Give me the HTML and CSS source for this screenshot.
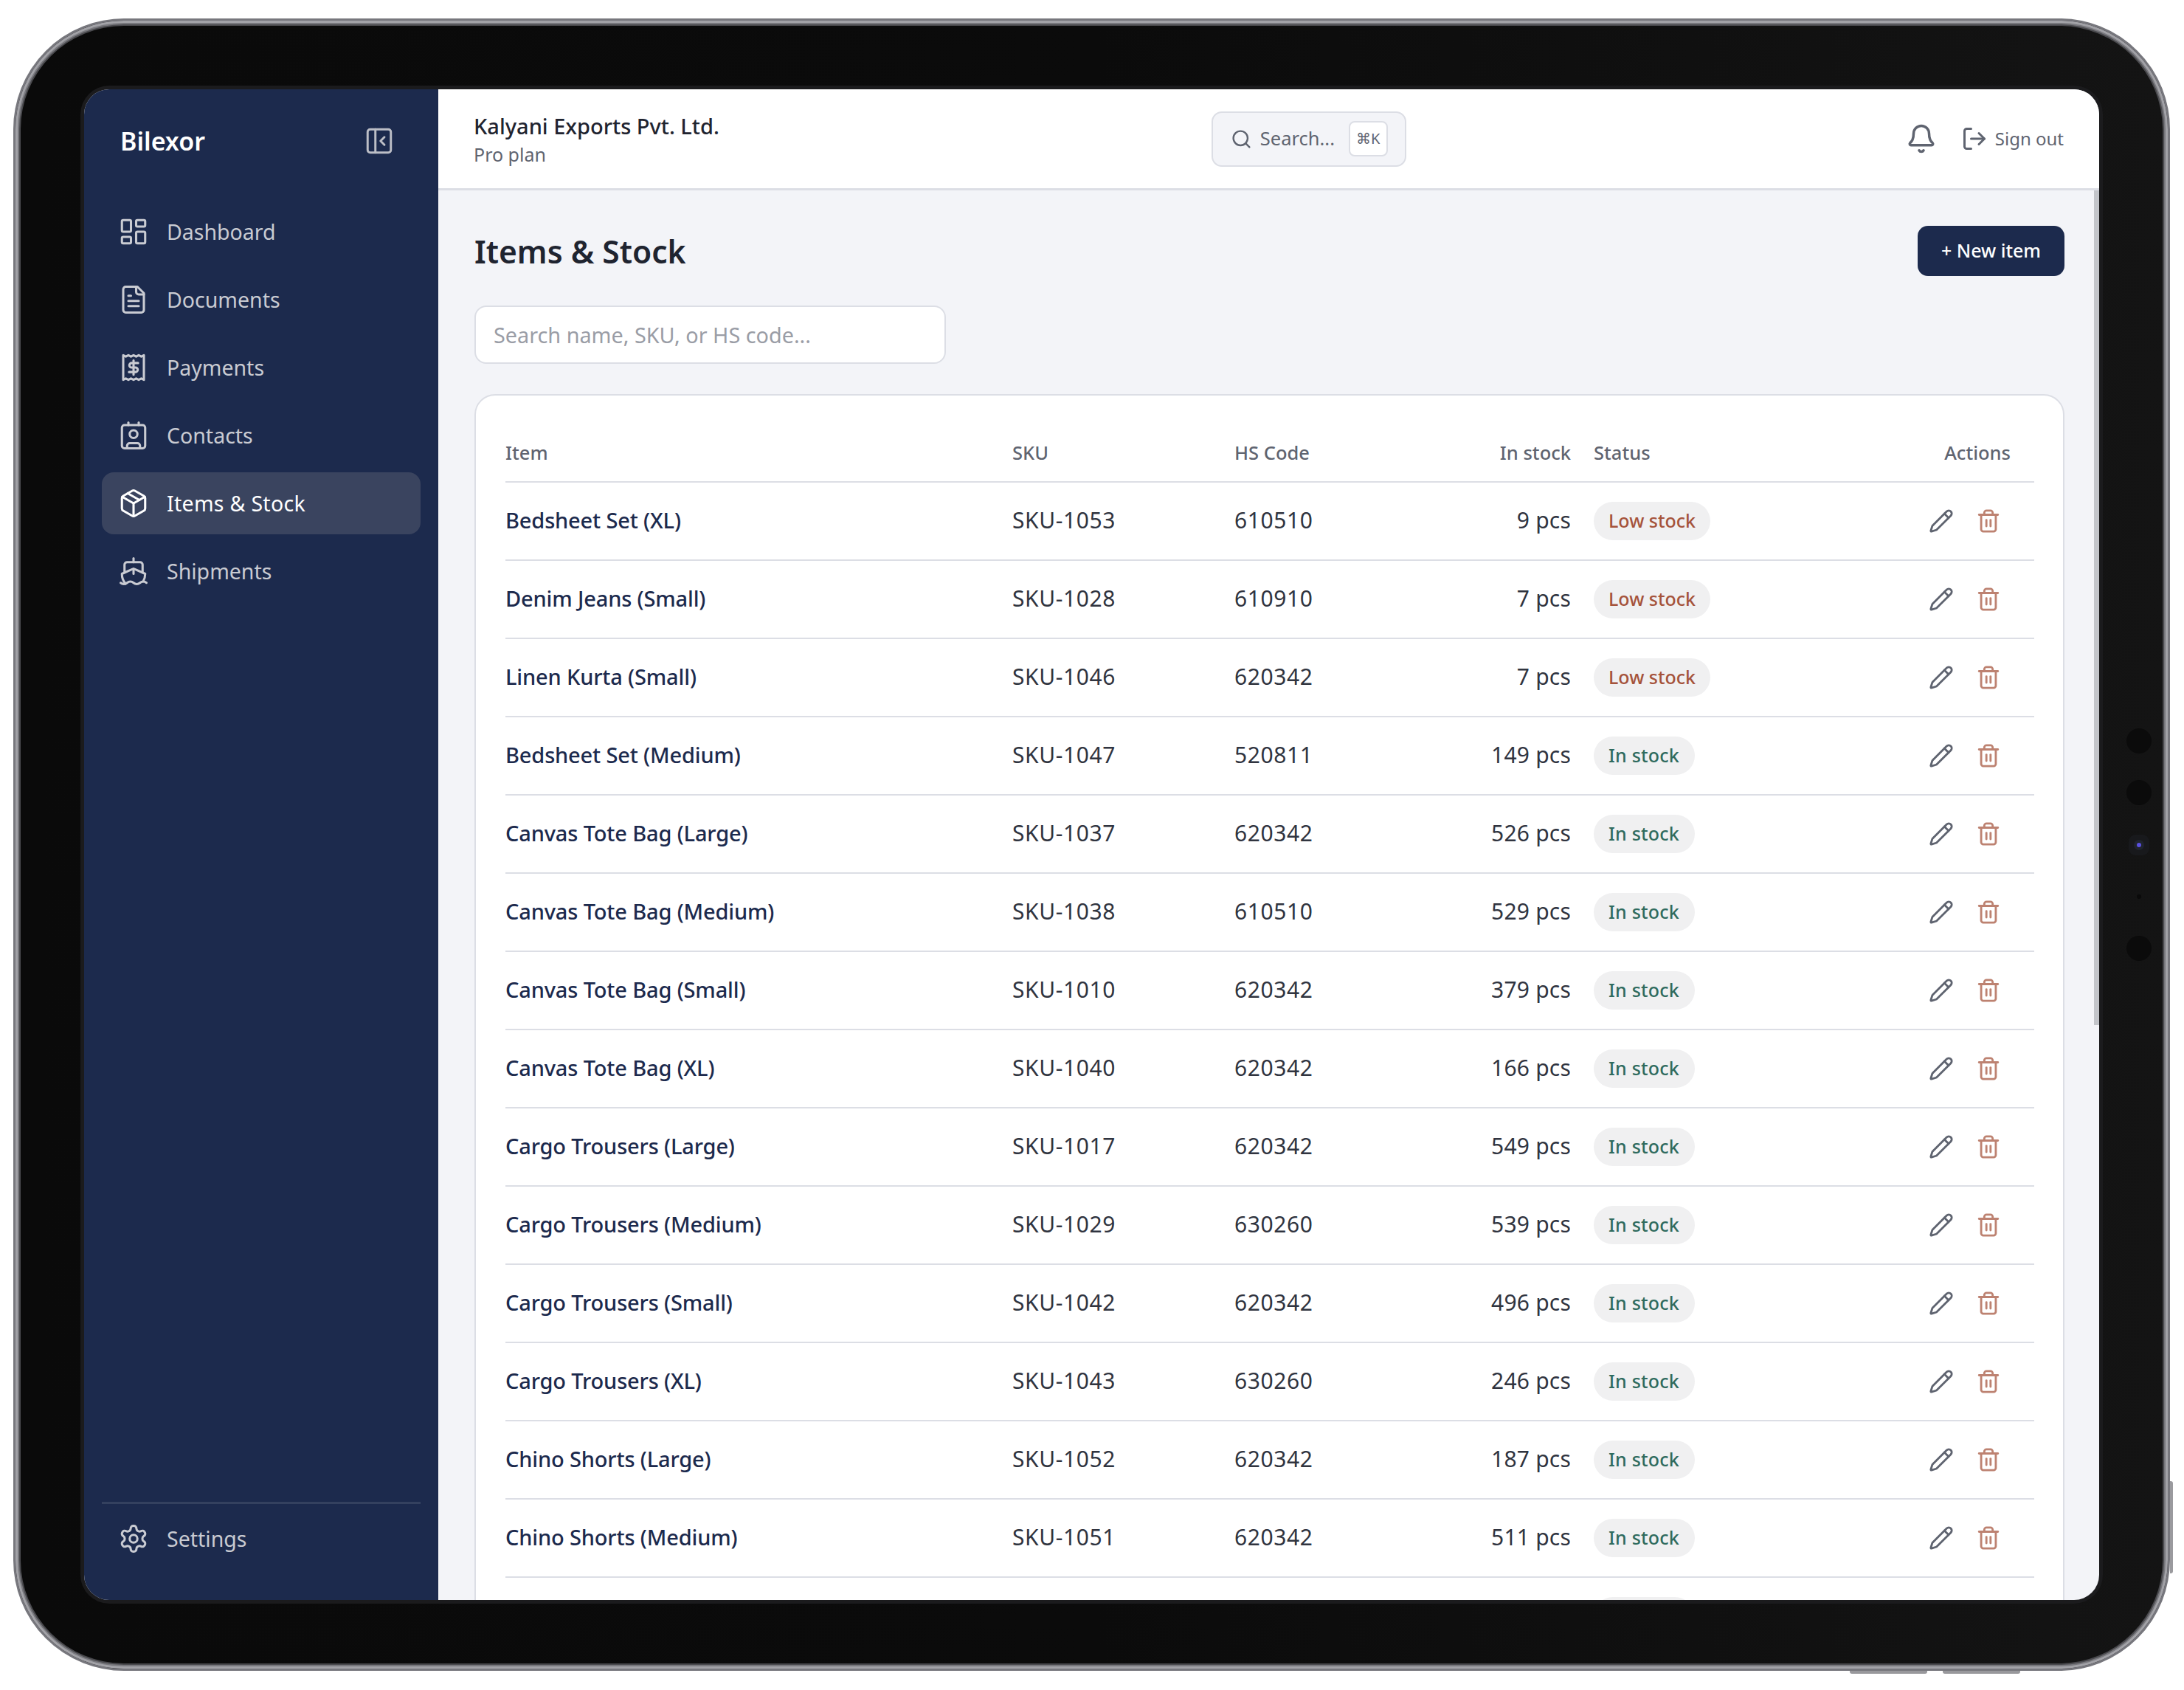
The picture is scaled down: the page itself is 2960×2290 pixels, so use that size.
FILE: index.html
```html
<!DOCTYPE html>
<html>
<head lang="en">
    <meta charset="UTF-8">
    <title>Items &amp; Stock</title>
    <link rel="stylesheet" href="styles.css">
</head>
<body>
<svg width="0" height="0" class="defs">
    <symbol id="i-dash" viewBox="0 0 24 24"><rect width="7" height="9" x="3" y="3" rx="1"/><rect width="7" height="5" x="14" y="3" rx="1"/><rect width="7" height="9" x="14" y="12" rx="1"/><rect width="7" height="5" x="3" y="16" rx="1"/></symbol>
    <symbol id="i-doc" viewBox="0 0 24 24"><path d="M15 2H6a2 2 0 0 0-2 2v16a2 2 0 0 0 2 2h12a2 2 0 0 0 2-2V7Z"/><path d="M14 2v4a2 2 0 0 0 2 2h4"/><path d="M10 9H8"/><path d="M16 13H8"/><path d="M16 17H8"/></symbol>
    <symbol id="i-pay" viewBox="0 0 24 24"><path d="M4 2.5l2 1 2-1 2 1 2-1 2 1 2-1 2 1 2-1v19l-2-1-2 1-2-1-2 1-2-1-2 1-2-1-2 1z"/><path d="M15.5 8.5h-5a1.75 1.75 0 0 0 0 3.5h3a1.75 1.75 0 0 1 0 3.5h-5"/><path d="M12 6.5v11"/></symbol>
    <symbol id="i-contact" viewBox="0 0 24 24"><path d="M16 2v2"/><path d="M7 22v-2a2 2 0 0 1 2-2h6a2 2 0 0 1 2 2v2"/><path d="M8 2v2"/><circle cx="12" cy="11" r="3"/><rect x="3" y="4" width="18" height="18" rx="2"/></symbol>
    <symbol id="i-box" viewBox="0 0 24 24"><path d="M11 21.73a2 2 0 0 0 2 0l7-4A2 2 0 0 0 21 16V8a2 2 0 0 0-1-1.73l-7-4a2 2 0 0 0-2 0l-7 4A2 2 0 0 0 3 8v8a2 2 0 0 0 1 1.73z"/><path d="M12 22V12"/><path d="M3.29 7 12 12l8.71-5"/><path d="m7.5 4.27 9 5.15"/></symbol>
    <symbol id="i-ship" viewBox="0 0 24 24"><path d="M12 10.189V14"/><path d="M12 2v3"/><path d="M19 13V7a2 2 0 0 0-2-2H7a2 2 0 0 0-2 2v6"/><path d="M19.38 20A11.6 11.6 0 0 0 21 14l-8.188-3.639a2 2 0 0 0-1.624 0L3 14a11.6 11.6 0 0 0 2.81 7.76"/><path d="M2 21c.6.5 1.2 1 2.5 1 2.5 0 2.5-2 5-2 1.3 0 1.9.5 2.5 1s1.2 1 2.5 1c2.5 0 2.5-2 5-2 1.3 0 1.9.5 2.5 1"/></symbol>
    <symbol id="i-gear" viewBox="0 0 24 24"><path d="M12.22 2h-.44a2 2 0 0 0-2 2v.18a2 2 0 0 1-1 1.73l-.43.25a2 2 0 0 1-2 0l-.15-.08a2 2 0 0 0-2.73.73l-.22.38a2 2 0 0 0 .73 2.73l.15.1a2 2 0 0 1 1 1.72v.51a2 2 0 0 1-1 1.74l-.15.09a2 2 0 0 0-.73 2.73l.22.38a2 2 0 0 0 2.73.73l.15-.08a2 2 0 0 1 2 0l.43.25a2 2 0 0 1 1 1.73V20a2 2 0 0 0 2 2h.44a2 2 0 0 0 2-2v-.18a2 2 0 0 1 1-1.73l.43-.25a2 2 0 0 1 2 0l.15.08a2 2 0 0 0 2.73-.73l.22-.39a2 2 0 0 0-.73-2.73l-.15-.08a2 2 0 0 1-1-1.74v-.5a2 2 0 0 1 1-1.74l.15-.09a2 2 0 0 0 .73-2.73l-.22-.38a2 2 0 0 0-2.73-.73l-.15.08a2 2 0 0 1-2 0l-.43-.25a2 2 0 0 1-1-1.73V4a2 2 0 0 0-2-2z"/><circle cx="12" cy="12" r="3"/></symbol>
    <symbol id="i-panel" viewBox="0 0 24 24"><rect width="18" height="18" x="3" y="3" rx="2"/><path d="M9 3v18"/><path d="m16 15-3-3 3-3"/></symbol>
    <symbol id="i-search" viewBox="0 0 24 24"><circle cx="11" cy="11" r="8"/><path d="m21 21-4.3-4.3"/></symbol>
    <symbol id="i-bell" viewBox="0 0 24 24"><path d="M10.268 21a2 2 0 0 0 3.464 0"/><path d="M3.262 15.326A1 1 0 0 0 4 17h16a1 1 0 0 0 .74-1.673C19.41 13.956 18 12.499 18 8A6 6 0 0 0 6 8c0 4.499-1.411 5.956-2.738 7.326"/></symbol>
    <symbol id="i-out" viewBox="0 0 24 24"><path d="M9 21H5a2 2 0 0 1-2-2V5a2 2 0 0 1 2-2h4"/><path d="m16 17 5-5-5-5"/><path d="M21 12H9"/></symbol>
    <symbol id="i-pen" viewBox="0 0 24 24"><path d="M21.174 6.812a1 1 0 0 0-3.986-3.987L3.842 16.174a2 2 0 0 0-.5.83l-1.321 4.352a.5.5 0 0 0 .623.622l4.353-1.32a2 2 0 0 0 .83-.497z"/><path d="m15 5 4 4"/></symbol>
    <symbol id="i-trash" viewBox="0 0 24 24"><path d="M3 6h18"/><path d="M19 6v14c0 1-1 2-2 2H7c-1 0-2-1-2-2V6"/><path d="M8 6V4c0-1 1-2 2-2h4c1 0 2 1 2 2v2"/><path d="M10 11v6"/><path d="M14 11v6"/></symbol>
</svg>

<div class="device">
    <span class="btn-side"></span>
    <span class="btn-bottom b1"></span>
    <span class="btn-bottom b2"></span>
    <div class="sensors">
        <span class="dot"></span>
        <span class="dot"></span>
        <span class="led"></span>
        <span class="pin"></span>
        <span class="dot"></span>
    </div>
    <div class="screen">
        <aside class="sidebar">
            <div class="brand">
                <span class="brand-name">Bilexor</span>
                <svg class="ico collapse"><use href="#i-panel"/></svg>
            </div>
            <nav class="nav">
                <a class="nav-item"><svg class="ico"><use href="#i-dash"/></svg>Dashboard</a>
                <a class="nav-item"><svg class="ico"><use href="#i-doc"/></svg>Documents</a>
                <a class="nav-item"><svg class="ico"><use href="#i-pay"/></svg>Payments</a>
                <a class="nav-item"><svg class="ico"><use href="#i-contact"/></svg>Contacts</a>
                <a class="nav-item active"><svg class="ico"><use href="#i-box"/></svg>Items &amp; Stock</a>
                <a class="nav-item"><svg class="ico"><use href="#i-ship"/></svg>Shipments</a>
            </nav>
            <div class="side-foot">
                <a class="nav-item"><svg class="ico"><use href="#i-gear"/></svg>Settings</a>
            </div>
        </aside>
        <div class="main">
            <header class="topbar">
                <div class="org">
                    <div class="org-name">Kalyani Exports Pvt. Ltd.</div>
                    <div class="org-plan">Pro plan</div>
                </div>
                <div class="quick">
                    <svg class="ico"><use href="#i-search"/></svg>
                    <span>Search...</span>
                    <kbd>⌘K</kbd>
                </div>
                <div class="top-right">
                    <svg class="ico bell"><use href="#i-bell"/></svg>
                    <a class="signout"><svg class="ico"><use href="#i-out"/></svg><span>Sign out</span></a>
                </div>
            </header>
            <main class="page">
                <span class="thumb"></span>
                <div class="page-head">
                    <h1>Items &amp; Stock</h1>
                    <button class="new-btn">+ New item</button>
                </div>
                <div class="filter">Search name, SKU, or HS code...</div>
                <section class="card">
                    <table>
                        <thead>
                            <tr><th>Item</th><th>SKU</th><th>HS Code</th><th class="num">In stock</th><th class="st">Status</th><th class="act">Actions</th></tr>
                        </thead>
                        <tbody>
                            <tr><td class="name">Bedsheet Set (XL)</td><td>SKU-1053</td><td>610510</td><td class="num">9 pcs</td><td class="st"><span class="pill low">Low stock</span></td><td class="act"><svg class="ico pen"><use href="#i-pen"/></svg><svg class="ico trash"><use href="#i-trash"/></svg></td></tr>
                            <tr><td class="name">Denim Jeans (Small)</td><td>SKU-1028</td><td>610910</td><td class="num">7 pcs</td><td class="st"><span class="pill low">Low stock</span></td><td class="act"><svg class="ico pen"><use href="#i-pen"/></svg><svg class="ico trash"><use href="#i-trash"/></svg></td></tr>
                            <tr><td class="name">Linen Kurta (Small)</td><td>SKU-1046</td><td>620342</td><td class="num">7 pcs</td><td class="st"><span class="pill low">Low stock</span></td><td class="act"><svg class="ico pen"><use href="#i-pen"/></svg><svg class="ico trash"><use href="#i-trash"/></svg></td></tr>
                            <tr><td class="name">Bedsheet Set (Medium)</td><td>SKU-1047</td><td>520811</td><td class="num">149 pcs</td><td class="st"><span class="pill ok">In stock</span></td><td class="act"><svg class="ico pen"><use href="#i-pen"/></svg><svg class="ico trash"><use href="#i-trash"/></svg></td></tr>
                            <tr><td class="name">Canvas Tote Bag (Large)</td><td>SKU-1037</td><td>620342</td><td class="num">526 pcs</td><td class="st"><span class="pill ok">In stock</span></td><td class="act"><svg class="ico pen"><use href="#i-pen"/></svg><svg class="ico trash"><use href="#i-trash"/></svg></td></tr>
                            <tr><td class="name">Canvas Tote Bag (Medium)</td><td>SKU-1038</td><td>610510</td><td class="num">529 pcs</td><td class="st"><span class="pill ok">In stock</span></td><td class="act"><svg class="ico pen"><use href="#i-pen"/></svg><svg class="ico trash"><use href="#i-trash"/></svg></td></tr>
                            <tr><td class="name">Canvas Tote Bag (Small)</td><td>SKU-1010</td><td>620342</td><td class="num">379 pcs</td><td class="st"><span class="pill ok">In stock</span></td><td class="act"><svg class="ico pen"><use href="#i-pen"/></svg><svg class="ico trash"><use href="#i-trash"/></svg></td></tr>
                            <tr><td class="name">Canvas Tote Bag (XL)</td><td>SKU-1040</td><td>620342</td><td class="num">166 pcs</td><td class="st"><span class="pill ok">In stock</span></td><td class="act"><svg class="ico pen"><use href="#i-pen"/></svg><svg class="ico trash"><use href="#i-trash"/></svg></td></tr>
                            <tr><td class="name">Cargo Trousers (Large)</td><td>SKU-1017</td><td>620342</td><td class="num">549 pcs</td><td class="st"><span class="pill ok">In stock</span></td><td class="act"><svg class="ico pen"><use href="#i-pen"/></svg><svg class="ico trash"><use href="#i-trash"/></svg></td></tr>
                            <tr><td class="name">Cargo Trousers (Medium)</td><td>SKU-1029</td><td>630260</td><td class="num">539 pcs</td><td class="st"><span class="pill ok">In stock</span></td><td class="act"><svg class="ico pen"><use href="#i-pen"/></svg><svg class="ico trash"><use href="#i-trash"/></svg></td></tr>
                            <tr><td class="name">Cargo Trousers (Small)</td><td>SKU-1042</td><td>620342</td><td class="num">496 pcs</td><td class="st"><span class="pill ok">In stock</span></td><td class="act"><svg class="ico pen"><use href="#i-pen"/></svg><svg class="ico trash"><use href="#i-trash"/></svg></td></tr>
                            <tr><td class="name">Cargo Trousers (XL)</td><td>SKU-1043</td><td>630260</td><td class="num">246 pcs</td><td class="st"><span class="pill ok">In stock</span></td><td class="act"><svg class="ico pen"><use href="#i-pen"/></svg><svg class="ico trash"><use href="#i-trash"/></svg></td></tr>
                            <tr><td class="name">Chino Shorts (Large)</td><td>SKU-1052</td><td>620342</td><td class="num">187 pcs</td><td class="st"><span class="pill ok">In stock</span></td><td class="act"><svg class="ico pen"><use href="#i-pen"/></svg><svg class="ico trash"><use href="#i-trash"/></svg></td></tr>
                            <tr><td class="name">Chino Shorts (Medium)</td><td>SKU-1051</td><td>620342</td><td class="num">511 pcs</td><td class="st"><span class="pill ok">In stock</span></td><td class="act"><svg class="ico pen"><use href="#i-pen"/></svg><svg class="ico trash"><use href="#i-trash"/></svg></td></tr>
                            <tr><td class="name"></td><td></td><td></td><td class="num"></td><td class="st"><span class="pill ok empty"></span></td><td class="act"></td></tr>
                        </tbody>
                    </table>
                </section>
            </main>
        </div>
    </div>
</div>
</body>
</html>
```

FILE: styles.css
```css
*{
    margin: 0;
    padding: 0;
    box-sizing: border-box;
}
html, body{
    background: #fff;
    overflow: hidden;
}
body{
    width: 2960px;
    height: 2290px;
    padding: 25px 19px 26px 18px;
    font-family: "Noto Sans", "Liberation Sans", sans-serif;
}
.defs{
    position: absolute;
}
.ico{
    width: 34px;
    height: 34px;
    fill: none;
    stroke: currentColor;
    stroke-width: 2;
    stroke-linecap: round;
    stroke-linejoin: round;
    flex: none;
}

/* device frame */
.device{
    position: relative;
    height: 2239px;
    border-radius: 150px;
    border: 3px solid #77777d;
    background: linear-gradient(90deg, #0a0a0a 0%, #0b0b0b 50%, #141414 100%);
    box-shadow: inset 0 0 0 3px #a2a2a7, inset 0 0 0 5px #77777c, inset 0 0 0 7px #4a4a4e;
    padding: 93px;
}
.btn-side{
    position: absolute;
    right: -7px;
    top: 1979px;
    width: 4px;
    height: 125px;
    background: #9a9a9e;
    border-radius: 0 3px 3px 0;
}
.btn-bottom{
    position: absolute;
    bottom: -7px;
    width: 105px;
    height: 4px;
    background: #98989c;
    border-radius: 0 0 3px 3px;
}
.b1{
    right: 326px;
}
.b2{
    right: 200px;
}
.sensors{
    position: absolute;
    left: 2861px;
    top: 959px;
    width: 34px;
    height: 34px;
}
.sensors span{
    position: absolute;
    border-radius: 50%;
}
.dot{
    width: 34px;
    height: 34px;
    background: #0b0b0b;
    left: 0;
}
.dot:nth-child(1){
    top: 0;
}
.dot:nth-child(2){
    top: 70px;
}
.dot:nth-child(5){
    top: 281px;
}
.led{
    left: 14px;
    top: 155px;
    width: 6px;
    height: 6px;
    background: #5a50e0;
    box-shadow: 0 0 0 4px #20242e, 0 0 0 11px #18191c;
}
.pin{
    left: 14px;
    top: 225px;
    width: 6px;
    height: 6px;
    background: #0a0a0a;
}
.screen{
    display: flex;
    height: 2047px;
    border-radius: 34px;
    overflow: hidden;
    box-shadow: 0 0 0 5px #1b1b1d;
    background: #f3f4f8;
}

/* sidebar */
.sidebar{
    width: 480px;
    flex: none;
    background: #1c2a4d;
    color: #c9cbd2;
    padding: 0 24px;
    display: flex;
    flex-direction: column;
}
.brand{
    height: 140px;
    padding: 0 35px 0 25px;
    display: flex;
    align-items: center;
    justify-content: space-between;
}
.brand-name{
    color: #fff;
    font-size: 34px;
    font-weight: 600;
}
.collapse{
    width: 42px;
    height: 42px;
    stroke-width: 1.7;
    color: #bcbec6;
}
.nav{
    flex: 1;
    padding-top: 11px;
}
.nav-item{
    display: flex;
    align-items: center;
    gap: 24px;
    height: 84px;
    margin-bottom: 8px;
    padding: 0 22px;
    font-size: 28.5px;
    border-radius: 16px;
    color: #c9cbd2;
}
.nav-item .ico{
    width: 42px;
    height: 42px;
    stroke-width: 1.75;
}
.nav-item.active{
    background: #3a445f;
    color: #fff;
    letter-spacing: .3px;
}
.side-foot{
    border-top: 3px solid #34415f;
    padding-top: 5px;
    height: 133px;
}

/* top bar */
.main{
    flex: 1;
    min-width: 0;
    display: flex;
    flex-direction: column;
}
.topbar{
    height: 137px;
    flex: none;
    background: #fff;
    border-bottom: 3px solid #dcdee5;
    padding: 0 48px;
    display: flex;
    justify-content: space-between;
    align-items: center;
}
.org-name{
    font-size: 29px;
    font-weight: 500;
    color: #1f2430;
}
.org-plan{
    font-size: 25px;
    color: #5f6470;
    margin-top: 2px;
}
.quick{
    width: 264px;
    height: 75px;
    margin-left: -10px;
    background: #f3f4f8;
    border: 2px solid #dcdee5;
    border-radius: 14px;
    padding: 0 24px;
    display: flex;
    align-items: center;
    gap: 11px;
    font-size: 25.5px;
    color: #5f6470;
}
.quick span{
    padding-bottom: 2px;
}
.quick .ico{
    width: 29px;
    height: 29px;
}
.quick kbd{
    width: 53px;
    height: 48px;
    margin-left: auto;
    margin-right: -1px;
    flex: none;
    background: #fff;
    border: 2px solid #dcdee5;
    border-radius: 8px;
    text-align: center;
    line-height: 44px;
    font-family: "Noto Sans", "DejaVu Sans", sans-serif;
    font-size: 20px;
    color: #5f6470;
}
.top-right{
    display: flex;
    align-items: center;
    justify-content: flex-end;
    gap: 33px;
    color: #5f6470;
}
.bell{
    width: 42px;
    height: 42px;
}
.signout{
    display: flex;
    align-items: center;
    gap: 10px;
    font-size: 24px;
}
.signout span{
    padding-bottom: 2px;
}
.signout .ico{
    width: 36px;
    height: 36px;
}

/* page */
.page{
    position: relative;
    flex: 1;
    min-height: 0;
    overflow: hidden;
    padding: 48px 47px 0 49px;
}
.thumb{
    position: absolute;
    right: 0;
    top: 0;
    width: 7px;
    height: 1131px;
    background: #c3c5ca;
}
.page-head{
    display: flex;
    justify-content: space-between;
    align-items: center;
    height: 68px;
}
h1{
    font-size: 42.5px;
    font-weight: 600;
    color: #1f2430;
}
.new-btn{
    width: 199px;
    height: 68px;
    border: 0;
    border-radius: 14px;
    background: #1c2a4d;
    color: #fff;
    font-family: inherit;
    font-size: 25px;
    font-weight: 500;
    padding-bottom: 2px;
}
.filter{
    width: 639px;
    height: 79px;
    margin-top: 40px;
    background: #fff;
    border: 2px solid #dcdee5;
    border-radius: 16px;
    padding: 0 24px;
    line-height: 75px;
    font-size: 28.8px;
    color: #9a9da6;
}
.card{
    margin-top: 41px;
    height: 1800px;
    background: #fff;
    border: 2px solid #dcdee5;
    border-radius: 28px;
    padding: 39px 40px 0;
}
table{
    width: 2072px;
    border-collapse: collapse;
    table-layout: fixed;
}
th{
    height: 78px;
    padding-bottom: 2px;
    text-align: left;
    font-size: 25.5px;
    font-weight: 500;
    color: #5f6470;
    border-bottom: 2px solid #dcdee5;
}
th:nth-child(1){
    width: 687px;
}
th:nth-child(2){
    width: 301px;
}
th:nth-child(3){
    width: 300px;
}
th:nth-child(4){
    width: 156px;
}
th:nth-child(5){
    width: 300px;
}
td{
    height: 106px;
    padding-bottom: 3px;
    font-size: 30px;
    letter-spacing: .6px;
    color: #30343f;
    border-bottom: 2px solid #dcdee5;
    white-space: nowrap;
}
td.name{
    color: #1c2a4d;
    font-size: 29px;
    font-weight: 500;
    letter-spacing: -.15px;
}
td.num{
    letter-spacing: .2px;
}
.num{
    text-align: right;
}
td.st, td.act{
    padding-bottom: 0;
}
.st{
    padding-left: 31px;
}
th.act{
    text-align: right;
    padding-right: 32px;
}
td.act{
    text-align: right;
    padding-right: 45px;
    font-size: 0;
    line-height: 0;
}
.pill{
    display: inline-block;
    height: 52px;
    line-height: 50px;
    padding: 0 20px;
    border-radius: 26px;
    font-size: 25px;
    font-weight: 500;
    letter-spacing: 0;
}
.pill.low{
    background: #f0f0f1;
    color: #a5533b;
}
.pill.ok{
    background: #f0f0f1;
    color: #2f6b5e;
    padding: 0 21px 0 20px;
    letter-spacing: .2px;
}
.pill.empty{
    width: 136px;
    vertical-align: middle;
}
.pen{
    color: #5f6470;
    vertical-align: top;
}
.trash{
    color: #a5533b;
    opacity: .72;
    margin-left: 30px;
    vertical-align: top;
}
```
